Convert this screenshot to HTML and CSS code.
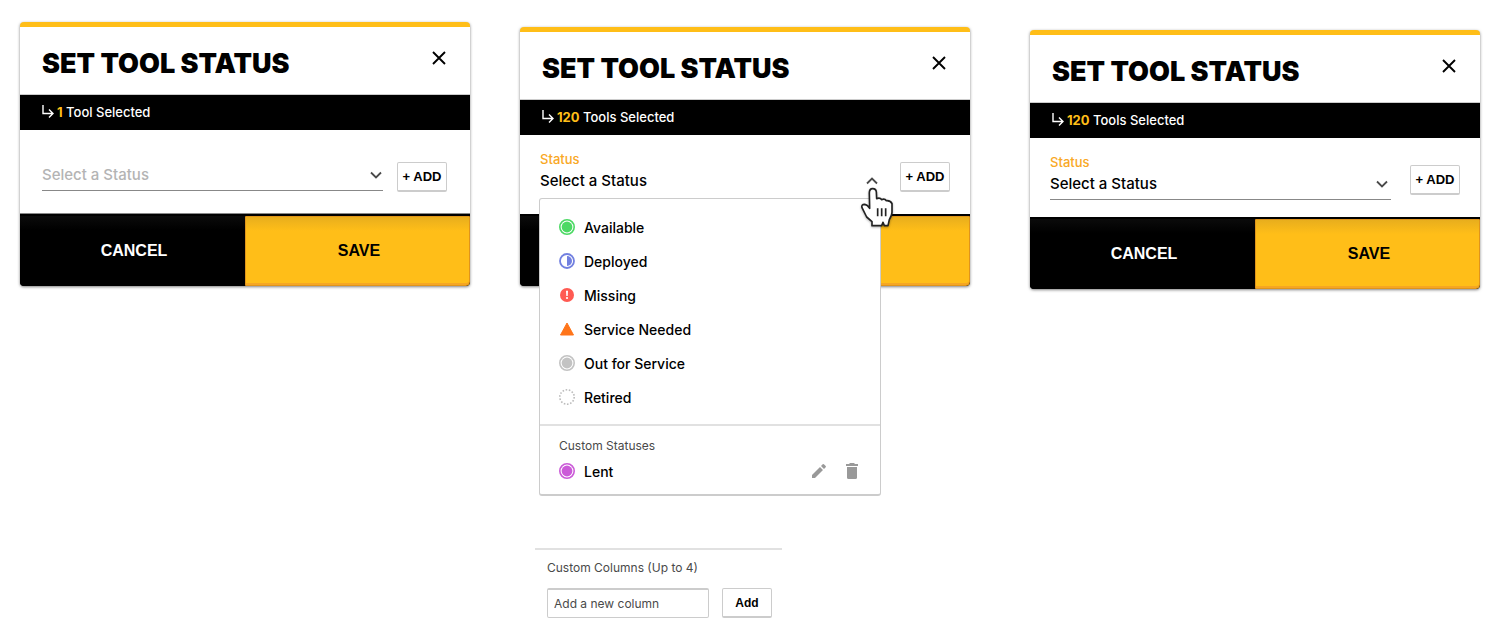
FILE: index.html
```html
<!DOCTYPE html>
<html lang="en">
<head>
    <meta charset="utf-8">
    <title>Set Tool Status</title>
    <link rel="stylesheet" href="styles.css">
</head>
<body>
    <!-- shared icons -->
    <svg class="icon-defs" width="0" height="0">
        <symbol id="icon-close" viewBox="0 0 14 14"><path d="M1 1l12 12M13 1L1 13" fill="none" stroke="#000" stroke-width="1.900"/></symbol>
        <symbol id="icon-arrow" viewBox="0 0 12 13"><path d="M1 0v8.500h10M7 4.500l4 4-4 4" fill="none" stroke="#fff" stroke-width="1.400"/></symbol>
        <symbol id="icon-chevron" viewBox="0 0 14 8"><path d="M2 1.500L7 6.500 12 1.500" fill="none" stroke="#4a4a4a" stroke-width="1.800"/></symbol>
    </svg>

    <main class="board">
        <div class="column column-first">
            <section class="card">
                <header class="card-header">
                    <h2>SET TOOL STATUS</h2>
                    <button class="close" aria-label="Close"><svg><use href="#icon-close"/></svg></button>
                </header>
                <div class="selected"><svg><use href="#icon-arrow"/></svg><p><strong>1</strong> Tool Selected</p></div>
                <div class="card-body">
                    <div class="field">
                        <div class="select-wrap">
                            <select class="select placeholder" aria-label="Status">
                                <option>Select a Status</option>
                            </select>
                            <svg class="chevron"><use href="#icon-chevron"/></svg>
                        </div>
                    </div>
                    <button class="btn-small add">+ ADD</button>
                </div>
                <footer class="card-footer">
                    <button class="btn cancel">CANCEL</button>
                    <button class="btn save">SAVE</button>
                </footer>
            </section>
        </div>

        <div class="column column-second">
            <section class="card">
                <header class="card-header">
                    <h2>SET TOOL STATUS</h2>
                    <button class="close" aria-label="Close"><svg><use href="#icon-close"/></svg></button>
                </header>
                <div class="selected"><svg><use href="#icon-arrow"/></svg><p><strong>120</strong> Tools Selected</p></div>
                <div class="card-body labelled">
                    <div class="field">
                        <label for="status-open">Status</label>
                        <div class="select-wrap">
                            <button class="select open" id="status-open" aria-haspopup="listbox" aria-expanded="true">Select a Status</button>
                            <svg class="chevron up"><use href="#icon-chevron"/></svg>
                        </div>
                        <div class="menu">
                            <ul class="menu-list">
                                <li>
                                    <svg viewBox="0 0 16 16"><circle cx="8" cy="8" r="7.200" fill="none" stroke="#4cd964" stroke-width="1.600"/><circle cx="8" cy="8" r="5.400" fill="#4cd964"/></svg>
                                    Available
                                </li>
                                <li>
                                    <svg viewBox="0 0 16 16"><circle cx="8" cy="8" r="7" fill="none" stroke="#7280e0" stroke-width="1.800"/><path d="M8 3a5 5 0 0 1 0 10z" fill="#7280e0"/></svg>
                                    Deployed
                                </li>
                                <li>
                                    <svg viewBox="0 0 16 16"><circle cx="8" cy="8" r="7" fill="#ff5a52"/><path d="M7 3.800h2l-.3 5.200H7.300z" fill="#fff"/><circle cx="8" cy="11" r="1.100" fill="#fff"/></svg>
                                    Missing
                                </li>
                                <li>
                                    <svg viewBox="0 0 16 16"><path d="M8 2l6.500 12h-13z" fill="#ff751a" stroke="#ff751a" stroke-linejoin="round"/></svg>
                                    Service Needed
                                </li>
                                <li>
                                    <svg viewBox="0 0 16 16"><circle cx="8" cy="8" r="7.200" fill="none" stroke="#c3c3c3" stroke-width="1.600"/><circle cx="8" cy="8" r="5.400" fill="#c3c3c3"/></svg>
                                    Out for Service
                                </li>
                                <li>
                                    <svg viewBox="0 0 16 16"><circle cx="8" cy="8" r="7.200" fill="none" stroke="#bbb" stroke-width="1.600" stroke-dasharray="1.600 1.632"/></svg>
                                    Retired
                                </li>
                            </ul>
                            <div class="menu-custom">
                                <h3>Custom Statuses</h3>
                                <ul class="menu-items">
                                    <li>
                                        <svg viewBox="0 0 16 16"><circle cx="8" cy="8" r="7.200" fill="none" stroke="#cb5bd8" stroke-width="1.600"/><circle cx="8" cy="8" r="5.400" fill="#cb5bd8"/></svg>
                                        Lent
                                        <span class="actions">
                                            <button aria-label="Edit"><svg viewBox="0 0 16 16"><path d="M1 12v3h3l8-8-3-3zM14.700 4.300a.9.900 0 0 0 0-1.200l-1.800-1.800a.9.900 0 0 0-1.200 0L10 3l3 3z" fill="#999"/></svg></button>
                                            <button aria-label="Delete"><svg viewBox="0 0 16 16"><path d="M2 1h3l1-1h4l1 1h3v2H2z" fill="#999"/><path d="M3 4h10v10.500a1.500 1.500 0 0 1-1.500 1.500h-7A1.500 1.500 0 0 1 3 14.500z" fill="#999"/></svg></button>
                                        </span>
                                    </li>
                                </ul>
                            </div>
                        </div>
                        <svg class="pointer" viewBox="0 0 102 123">
                            <path d="M28 18Q28 5 38 5Q48 5 49 15L50 35Q60 31 65 38Q74 34 79 41Q92 40 96 50V76Q96 84 88 98L84 116H73L69 106L65 116H36V104L20 90L6 62Q3 52 14 52Q22 53 29 64Z" fill="#fff" stroke="#222" stroke-width="5" stroke-linejoin="round"/>
                            <path d="M53 64v24M65 64v24M77 64v24" stroke="#222" stroke-width="5"/>
                        </svg>
                    </div>
                    <button class="btn-small add">+ ADD</button>
                </div>
                <footer class="card-footer">
                    <button class="btn cancel" aria-label="Cancel"></button>
                    <button class="btn save" aria-label="Save"></button>
                </footer>
            </section>

            <form class="custom-columns">
                <label for="new-column">Custom Columns (Up to 4)</label>
                <div class="custom-row">
                    <input type="text" id="new-column" placeholder="Add a new column">
                    <button type="button" class="btn-small">Add</button>
                </div>
            </form>
        </div>

        <div class="column column-third">
            <section class="card">
                <header class="card-header">
                    <h2>SET TOOL STATUS</h2>
                    <button class="close" aria-label="Close"><svg><use href="#icon-close"/></svg></button>
                </header>
                <div class="selected"><svg><use href="#icon-arrow"/></svg><p><strong>120</strong> Tools Selected</p></div>
                <div class="card-body labelled">
                    <div class="field">
                        <label for="status">Status</label>
                        <div class="select-wrap">
                            <select class="select" id="status">
                                <option>Select a Status</option>
                            </select>
                            <svg class="chevron"><use href="#icon-chevron"/></svg>
                        </div>
                    </div>
                    <button class="btn-small add">+ ADD</button>
                </div>
                <footer class="card-footer">
                    <button class="btn cancel">CANCEL</button>
                    <button class="btn save">SAVE</button>
                </footer>
            </section>
        </div>
    </main>
</body>
</html>
```
FILE: styles.css
```css
* {
    box-sizing: border-box;
}
body {
    margin: 0;
    background: #fff;
    color: #000;
    font-family: Inter, "Liberation Sans", Arial, sans-serif;
    font-size: 13px;
    font-weight: 500;
}
button, input, select {
    font-family: inherit;
    color: inherit;
    margin: 0;
}
button {
    cursor: pointer;
}
h2, h3, p, ul {
    margin: 0;
    padding: 0;
}
svg {
    display: block;
    flex: none;
}
.icon-defs {
    position: absolute;
}
.board {
    display: flex;
    align-items: flex-start;
    padding: 0 25px 0 20px;
}
.column {
    flex: 1;
    min-width: 0;
}
.column-first {
    padding-top: 22px;
}
.column-second {
    margin-left: 50px;
    padding-top: 27px;
}
.column-third {
    margin-left: 60px;
    padding-top: 30px;
}

/* Card */
.card {
    background: #fff;
    border-top: 5px solid #ffbe18;
    border-radius: 4px;
    box-shadow: 0 1px 3px rgba(0,0,0,0.5);
}
.card-header {
    display: flex;
    justify-content: space-between;
    align-items: flex-start;
    padding: 21px 24px 14px 22px;
    border-bottom: 1px solid #ccc;
}
.card-header h2 {
    font-size: 27px;
    font-weight: 900;
    line-height: 32px;
    white-space: nowrap;
}
.close {
    margin-top: 3px;
    padding: 0;
    border: 0;
    background: none;
}
.close svg {
    width: 14px;
    height: 14px;
}
.selected {
    display: flex;
    align-items: center;
    gap: 3px;
    height: 35px;
    padding: 0 22px 2px;
    background: #000;
    color: #fff;
}
.selected svg {
    width: 12px;
    height: 13px;
}
.selected strong {
    color: #ffbe18;
}
.card-body {
    display: flex;
    align-items: flex-start;
    gap: 14px;
    padding: 32px 23px 21px 22px;
    border-bottom: 1px solid #888;
}
.card-body.labelled {
    gap: 19px;
    padding: 16px 20px 17px;
    border-bottom: 0;
}
.labelled .add {
    margin-top: 11px;
}

/* Status field */
.field {
    position: relative;
    flex: 1;
}
.field label {
    display: block;
    line-height: 17px;
    color: #f9a825;
}
.select-wrap {
    position: relative;
}
.select {
    display: block;
    width: 100%;
    height: 29px;
    padding: 0 0 4px;
    border: 0;
    border-bottom: 1px solid #888;
    border-radius: 0;
    background: none;
    font-size: 15px;
    font-weight: 500;
    text-align: left;
    appearance: none;
}
.select.placeholder {
    color: #b4b4b4;
}
.select.open {
    border-bottom-color: transparent;
}
.chevron {
    position: absolute;
    right: 0;
    top: 9px;
    width: 14px;
    height: 8px;
    pointer-events: none;
}
.labelled .chevron {
    right: 2px;
}
.chevron.up {
    transform: rotate(180deg);
}
.btn-small {
    flex: none;
    width: 50px;
    height: 30px;
    padding: 0;
    border: 1px solid #ccc;
    border-bottom-width: 2px;
    border-radius: 2px;
    background: #fff;
    font-family: "Liberation Sans", Arial, sans-serif;
    font-size: 12px;
    font-weight: bold;
    white-space: nowrap;
}
.btn-small.add {
    font-size: 13px;
}

/* Footer buttons */
.card-footer {
    display: flex;
    height: 72px;
    padding-top: 2px;
    background: #000;
    border-radius: 0 0 4px 4px;
}
.btn {
    width: 50%;
    padding: 0 0 0 3px;
    border: 0;
    font-family: "Liberation Sans", Arial, sans-serif;
    font-size: 16px;
    font-weight: bold;
}
.cancel {
    background: linear-gradient(#0b0b0b, #000 14px);
    border-radius: 0 0 0 4px;
    color: #fff;
}
.save {
    background: linear-gradient(#e8ae1d, #ffbe18 14px);
    border: 1px solid #e0941a;
    border-radius: 0 0 4px 0;
    box-shadow: inset 0 -2px 0 #f5a623;
}

/* Dropdown menu */
.menu {
    position: absolute;
    z-index: 1;
    top: 47px;
    left: -1px;
    right: 0;
    padding-bottom: 6px;
    background: #fff;
    border: 1px solid #ccc;
    border-bottom-width: 2px;
    border-radius: 3px;
}
.menu ul {
    list-style: none;
}
.menu-list {
    padding: 11px 0 10px;
}
.menu li {
    display: flex;
    align-items: center;
    gap: 9px;
    height: 34px;
    padding: 0 20px 0 19px;
    font-size: 14px;
}
.menu svg {
    width: 16px;
    height: 16px;
}
.menu-custom {
    padding-top: 12px;
    border-top: 2px solid #e1e1e1;
}
.menu-custom h3 {
    padding-left: 19px;
    color: #4a4a4a;
    font-size: 12px;
    font-weight: normal;
    line-height: 16px;
}
.actions {
    display: flex;
    gap: 17px;
    margin-left: auto;
}
.actions button {
    padding: 0;
    border: 0;
    background: none;
}
.pointer {
    position: absolute;
    z-index: 2;
    top: 36px;
    right: -13px;
    width: 34px;
    height: 41px;
    filter: drop-shadow(0 1px 1px rgba(0,0,0,0.3));
}

/* Custom columns */
.custom-columns {
    width: 55%;
    max-width: 247px;
    margin: 262px 0 0 15px;
    padding: 10px 10px 10px 12px;
    border-top: 2px solid #e1e1e1;
    color: #4a4a4a;
    font-size: 12px;
    font-weight: normal;
}
.custom-columns label {
    display: block;
    line-height: 16px;
}
.custom-row {
    display: flex;
    gap: 13px;
    margin-top: 12px;
}
.custom-row input {
    flex: 1;
    min-width: 0;
    height: 30px;
    padding: 0 6px;
    border: 1px solid #ccc;
    border-top-width: 2px;
    border-radius: 2px;
    font-size: 12px;
}
.custom-row input::placeholder {
    color: #4a4a4a;
    opacity: 1;
}
.custom-row .btn-small {
    color: #000;
}
```
